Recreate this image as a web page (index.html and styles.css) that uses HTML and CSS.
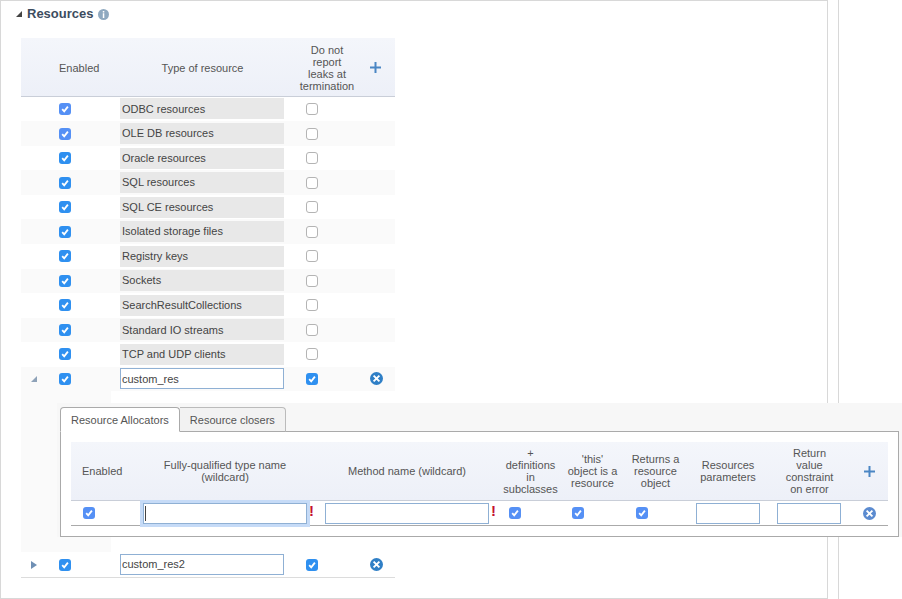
FILE: index.html
```html
<!DOCTYPE html>
<html lang="en">
<head>
<meta charset="utf-8">
<title>Resources</title>
<link rel="stylesheet" href="styles.css">
</head>
<body>
<svg class="defs" width="0" height="0" aria-hidden="true">
  <symbol id="tick" viewBox="0 0 12 12"><rect width="12" height="12" rx="3" fill="currentColor"/><path d="M3.2 6.2 5.2 8.4 8.9 3.6" fill="none" stroke="#fff" stroke-width="1.8"/></symbol>
  <symbol id="del" viewBox="0 0 13 13"><circle cx="6.5" cy="6.5" r="6.5" fill="currentColor"/><path d="M3.6 3.6 9.4 9.4M9.4 3.6 3.6 9.4" fill="none" stroke="#fff" stroke-width="1.9"/></symbol>
  <symbol id="plus" viewBox="0 0 11 11"><path d="M5.5 0v11M0 5.5h11" fill="none" stroke="currentColor" stroke-width="2"/></symbol>
</svg>
<div class="page">
  <main class="panel">
    <h2 class="title">
      <svg class="title-arrow" viewBox="0 0 6 6"><path d="M6 0V6H0Z"/></svg>
      Resources
      <svg class="info" viewBox="0 0 11 11"><circle cx="5.5" cy="5.5" r="5.5" fill="#8fa9c0"/><path d="M4.8 2h1.5v1.4H4.8zM4.8 4.3h1.5V9H4.8z" fill="#fff"/></svg>
    </h2>
    <div class="res-table">
      <div class="head res-grid">
        <span></span><span class="h-enabled">Enabled</span><span class="h-type">Type of resource</span><span class="h-leak">Do not<br>report<br>leaks at<br>termination</span>
        <svg class="ico-plus"><use href="#plus"/></svg>
      </div>
      <div class="row res-grid"><span></span><svg class="cb c1"><use href="#tick"/></svg><input class="ro" readonly value="ODBC resources"><span class="empty"></span><span></span></div>
      <div class="row res-grid alt"><span></span><svg class="cb c1"><use href="#tick"/></svg><input class="ro" readonly value="OLE DB resources"><span class="empty"></span><span></span></div>
      <div class="row res-grid"><span></span><svg class="cb c2"><use href="#tick"/></svg><input class="ro" readonly value="Oracle resources"><span class="empty"></span><span></span></div>
      <div class="row res-grid alt"><span></span><svg class="cb c2"><use href="#tick"/></svg><input class="ro" readonly value="SQL resources"><span class="empty"></span><span></span></div>
      <div class="row res-grid"><span></span><svg class="cb c2"><use href="#tick"/></svg><input class="ro" readonly value="SQL CE resources"><span class="empty"></span><span></span></div>
      <div class="row res-grid alt"><span></span><svg class="cb c2"><use href="#tick"/></svg><input class="ro" readonly value="Isolated storage files"><span class="empty"></span><span></span></div>
      <div class="row res-grid"><span></span><svg class="cb c2"><use href="#tick"/></svg><input class="ro" readonly value="Registry keys"><span class="empty"></span><span></span></div>
      <div class="row res-grid alt"><span></span><svg class="cb c2"><use href="#tick"/></svg><input class="ro" readonly value="Sockets"><span class="empty"></span><span></span></div>
      <div class="row res-grid"><span></span><svg class="cb c2"><use href="#tick"/></svg><input class="ro" readonly value="SearchResultCollections"><span class="empty"></span><span></span></div>
      <div class="row res-grid alt"><span></span><svg class="cb c2"><use href="#tick"/></svg><input class="ro" readonly value="Standard IO streams"><span class="empty"></span><span></span></div>
      <div class="row res-grid"><span></span><svg class="cb c2"><use href="#tick"/></svg><input class="ro" readonly value="TCP and UDP clients"><span class="empty"></span><span></span></div>
      <div class="row res-grid alt">
        <svg class="exp" viewBox="0 0 6 6"><path d="M6 0V6H0Z"/></svg>
        <svg class="cb c2"><use href="#tick"/></svg><input class="edit" value="custom_res"><svg class="cb c2 leak-cb"><use href="#tick"/></svg><svg class="ico-del"><use href="#del"/></svg>
      </div>
      <div class="detail">
        <div class="nested">
          <div class="tabs"><span class="tab active">Resource Allocators</span><span class="tab">Resource closers</span></div>
          <div class="tab-panel">
            <div class="sub-head sub-grid">
              <span class="sh-enabled">Enabled</span><span class="sh-a">Fully-qualified type name<br>(wildcard)</span><span class="sh-b">Method name (wildcard)</span><span>+<br>definitions<br>in<br>subclasses</span><span>'this'<br>object is a<br>resource</span><span>Returns a<br>resource<br>object</span><span>Resources<br>parameters</span><span>Return<br>value<br>constraint<br>on error</span>
              <svg class="ico-plus"><use href="#plus"/></svg>
            </div>
            <div class="sub-row sub-grid">
              <svg class="cb c1 s1"><use href="#tick"/></svg>
              <span class="req-wrap"><span class="focus-wrap"><input class="edit"></span><b class="req">!</b></span>
              <span class="req-wrap"><input class="edit"><b class="req">!</b></span>
              <svg class="cb c1 s3"><use href="#tick"/></svg>
              <svg class="cb c1 s4"><use href="#tick"/></svg>
              <svg class="cb c1 s5"><use href="#tick"/></svg>
              <input class="edit small s6">
              <input class="edit small s7">
              <svg class="ico-del muted"><use href="#del"/></svg>
            </div>
          </div>
        </div>
      </div>
      <div class="row res-grid last">
        <svg class="exp closed" viewBox="0 0 6 8"><path d="M0 0 6 4 0 8Z"/></svg>
        <svg class="cb c2"><use href="#tick"/></svg><input class="edit" value="custom_res2"><svg class="cb c2 leak-cb"><use href="#tick"/></svg><svg class="ico-del"><use href="#del"/></svg>
      </div>
    </div>
  </main>
  <aside class="side"></aside>
</div>
</body>
</html>
```
FILE: styles.css
```css
* { box-sizing: border-box; }
html, body { margin: 0; height: 100%; overflow: hidden; background: #fff; }
body { font: 11px/12px "Liberation Sans", Arial, sans-serif; color: #555; }
.defs { position: absolute; }
.page { display: flex; width: 902px; height: 599px; }
.panel { flex: 0 0 828px; height: 599px; border: 1px solid #d8d8d8; padding: 0 0 0 20px; z-index: 1; }
.side { flex: 1; margin-left: 10px; border-left: 1px solid #d8d8d8; }

.title { display: flex; align-items: center; margin: 5px 0 16px -5px; height: 16px; font-size: 13px; font-weight: bold; color: #3d4d5f; line-height: 16px; }
.title-arrow { width: 6px; height: 6px; margin-right: 5px; fill: #444; }
.info { width: 11px; height: 11px; margin-left: 5px; }

.res-table { width: 374px; }
.res-grid { display: grid; grid-template-columns: 38px 61px 178px 58px 39px; align-items: center; }
.head { height: 58.7px; padding-top: 2px; background: linear-gradient(#f4f6fb, #edf0f8); border-bottom: 1px solid #c9ced8; text-align: center; }
.h-enabled { text-align: left; }
.h-type { padding-right: 13px; }
.h-leak { white-space: nowrap; }
.ico-plus { width: 11px; height: 11px; color: #4a86c4; justify-self: center; }

.row { height: 24.55px; }
.alt { background: #fafafa; }
.last { height: 25.7px; border-bottom: 1px solid #dcdcdc; }

.cb { width: 12px; height: 12px; display: block; }
.c1 { color: #5590f5; }
.c2 { color: #2f90f0; }
.leak-cb { margin-left: 8px; }
.empty { display: block; width: 12px; height: 12px; margin-left: 8px; border: 1px solid #b4b4b4; border-radius: 3px; background: #fff; }
.ico-del { width: 13px; height: 13px; margin-left: 1px; color: #2f7fc6; justify-self: center; }
.ico-del.muted { color: #5b8bd0; }
.exp { width: 6px; height: 6px; margin-left: 10px; fill: #8ea2b8; }
.exp.closed { height: 8px; fill: #6f8fb4; }

input { display: block; width: 164px; height: 21px; margin: 0; padding: 0 1px 0.6px; font: 11px "Liberation Sans", Arial, sans-serif; color: #444; outline: none; border-radius: 0; }
.ro { background: #e8e8e8; border: 0; padding-left: 2px; }
.edit { background: #fff; border: 1px solid #8fb0d4; }
.small { width: 64px; }

.detail { width: 881px; padding: 12px 0 15px 36px; background: linear-gradient(#fafafa, #fafafa) no-repeat 0 0 / 90px 100%; }
.nested { padding: 4px 3px 0; background: #f7f7f7; }
.tabs { display: flex; height: 24px; }
.tab { display: block; height: 25px; padding: 0 10px; line-height: 24px; background: #f2f2f2; border: 1px solid #bbb; border-left: 0; border-bottom: 1px solid #aaa; border-radius: 0 4px 0 0; color: #555; position: relative; }
.tab.active { background: #fff; border-left: 1px solid #aaa; border-color: #aaa; border-bottom-color: #fff; border-radius: 4px 4px 0 0; }
.tab-panel { height: 106px; padding: 10px; border: 1px solid #aaa; background: #fff; }

.sub-grid { display: grid; grid-template-columns: 72px 182px 175px 61px 63px 63px 82px 81px 38px; align-items: center; }
.sub-head { height: 59px; background: linear-gradient(#f4f6fb, #edf0f8); border-bottom: 1px solid #c9ced8; text-align: center; white-space: nowrap; }
.sh-enabled { text-align: left; padding-left: 11px; }
.sh-a { padding-right: 18px; }
.sh-b { padding-right: 11px; }
.sub-row { height: 25px; border-bottom: 1px solid #aaa; }
.s1 { margin-left: 12px; }
.s3 { margin-left: 9px; }
.s4 { margin-left: 11px; }
.s5 { margin-left: 12px; }
.s6 { margin-left: 9px; }
.s7 { margin-left: 8px; }
.req-wrap { display: flex; align-items: flex-start; }
.focus-wrap { display: block; box-shadow: 0 0 0 3px #c6dbf7; position: relative; }
.focus-wrap::after { content: ""; position: absolute; left: 2px; top: 3px; width: 1px; height: 15px; background: #444; }
.req { margin: 0 0 0 2px; width: 5px; font: bold 15px/15px "Liberation Sans", Arial, sans-serif; color: #c4122f; }
```
